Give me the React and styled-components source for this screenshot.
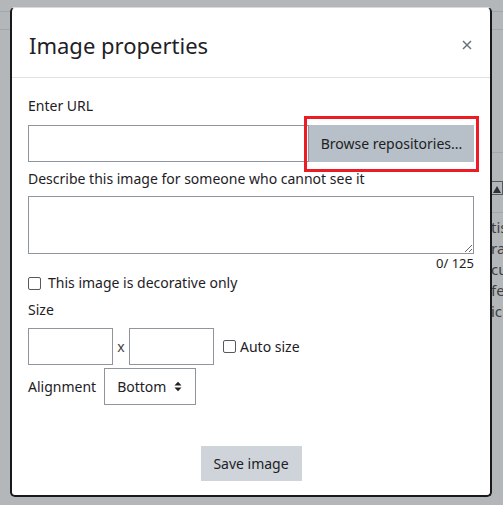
import styled, { createGlobalStyle } from "styled-components";

const GlobalStyle = createGlobalStyle`
  html, body {
    margin: 0;
    padding: 0;
  }
  body {
    width: 503px;
    height: 505px;
    overflow: hidden;
    background: #b4b7ba;
    font-family: "Noto Sans", "Open Sans", Arial, sans-serif;
    color: #1d2125;
  }
  #root {
    position: relative;
    width: 503px;
    height: 505px;
  }
`;

// page behind the dimmed backdrop
const Page = styled.div`
  width: 503px;
  height: 505px;
  display: flex;
  flex-direction: column;
`;

const NavBand = styled.div`
  height: ${(p) => p.h}px;
  border-bottom: 1px solid #a4a7aa;
  flex-shrink: 0;
`;

const PageBody = styled.div`
  flex: 1;
  display: grid;
  grid-template-columns: 1fr 12px;
`;

const Side = styled.div`
  overflow: hidden;
  padding-top: 122px;
  display: flex;
  flex-direction: column;
  font-size: 15px;
  color: #3c4146;
`;

const SideRule = styled.div`
  border-top: 1px solid #a4a7aa;
  height: ${(p) => p.h}px;
`;

const SideIcon = styled.div`
  width: 12px;
  height: 16px;
  display: flex;
  align-items: center;
  margin-bottom: 16px;
`;

const SideText = styled.div`
  white-space: nowrap;
  line-height: 21px;
`;

// modal
const Modal = styled.div`
  position: absolute;
  left: 10px;
  top: 7px;
  width: 482px;
  height: 490px;
  box-sizing: border-box;
  background: #fff;
  border: 2px solid #17191b;
  border-top: 1px solid #d9dcdf;
  border-radius: 5px;
  display: flex;
  flex-direction: column;
`;

const Header = styled.div`
  height: 70px;
  box-sizing: border-box;
  display: flex;
  align-items: center;
  justify-content: space-between;
  padding: 5px 17px 0 17px;
  border-bottom: 1px solid #dee2e6;
`;

const Title = styled.h5`
  margin: 0;
  font-size: 22px;
  font-weight: 400;
  line-height: 1.2;
  color: #1d2125;
`;

const Close = styled.button`
  border: none;
  background: none;
  padding: 0;
  width: 12px;
  height: 12px;
  display: flex;
  align-items: center;
  justify-content: center;
  cursor: pointer;
`;

const Body = styled.div`
  padding: 17px 16px 0 16px;
  display: flex;
  flex-direction: column;
  font-size: 14px;
`;

const Label = styled.label`
  display: block;
  line-height: 22px;
  margin-bottom: ${(p) => p.mb ?? 7}px;
`;

const InputGroup = styled.div`
  display: flex;
  height: 37px;
  margin-bottom: 6px;
`;

const TextInput = styled.input`
  box-sizing: border-box;
  height: ${(p) => p.h ?? 37}px;
  width: ${(p) => (p.w ? `${p.w}px` : "auto")};
  flex: ${(p) => (p.w ? "none" : 1)};
  min-width: 0;
  border: 1px solid #8f959e;
  border-radius: 0;
  padding: 0 10px;
  font: inherit;
  background: #fff;
  outline: none;
`;

const BrowseWrap = styled.div`
  position: relative;
  display: flex;
`;

const Highlight = styled.div`
  position: absolute;
  left: -5px;
  top: -9px;
  right: -5px;
  bottom: -10px;
  border: 3px solid #ec1c24;
  pointer-events: none;
`;

const GreyButton = styled.button`
  border: none;
  border-radius: 0;
  background: ${(p) => p.bg};
  color: #1d2125;
  font: inherit;
  font-size: 14px;
  width: ${(p) => p.w}px;
  padding: 0;
  height: ${(p) => p.h}px;
  cursor: pointer;
`;

const TextArea = styled.textarea`
  box-sizing: border-box;
  height: 58px;
  width: 100%;
  border: 1px solid #8f959e;
  border-radius: 0;
  font: inherit;
  resize: vertical;
  display: block;
  outline: none;
`;

const Counter = styled.div`
  text-align: right;
  font-size: 13px;
  line-height: 18px;
  color: #1d2125;
`;

const CheckRow = styled.label`
  display: flex;
  align-items: center;
  gap: ${(p) => p.gap ?? 7}px;
  line-height: 22px;
  margin: ${(p) => p.m ?? "0"};
`;

const Box = styled.span`
  width: 11px;
  height: 11px;
  border: 1px solid #555a60;
  border-radius: 2px;
  background: #fff;
  flex-shrink: 0;
`;

const SizeRow = styled.div`
  display: flex;
  align-items: center;
  height: 37px;
  margin-bottom: 3px;
`;

const Times = styled.span`
  width: 16px;
  text-align: center;
  color: #444;
`;

const AlignRow = styled.div`
  display: flex;
  align-items: center;
  gap: 8px;
  height: 37px;
`;

const Select = styled.div`
  box-sizing: border-box;
  height: 37px;
  width: 92px;
  border: 1px solid #8f959e;
  display: flex;
  align-items: center;
  padding-left: 12px;
  gap: 8px;
  color: #1d2125;
`;

const Footer = styled.div`
  display: flex;
  justify-content: center;
  padding-top: 41px;
`;

function Caret() {
  return (
    <svg width="8" height="11" viewBox="0 0 8 11">
      <path d="M0.5 4.5 L4 0.8 L7.5 4.5 Z" fill="#1d2125" />
      <path d="M0.5 6.5 L4 10.2 L7.5 6.5 Z" fill="#1d2125" />
    </svg>
  );
}

export default function App() {
  return (
    <>
      <GlobalStyle />
      <Page>
        <NavBand h={11} />
        <NavBand h={17} />
        <PageBody>
          <div />
          <Side>
            <SideRule h={27} />
            <SideIcon>
              <svg width="12" height="14" viewBox="0 0 12 14">
                <rect x="0.5" y="0.5" width="11" height="13" fill="none" stroke="#55595e" />
                <path d="M2 12 L6 5 L10 12 Z" fill="#2f3337" />
              </svg>
            </SideIcon>
            <SideRule h={4} />
            <SideText>tistics</SideText>
            <SideText>rading</SideText>
            <SideText>cument</SideText>
            <SideText>feedback</SideText>
            <SideText>ick</SideText>
          </Side>
        </PageBody>
      </Page>

      <Modal role="dialog">
        <Header>
          <Title>Image properties</Title>
          <Close aria-label="Close">
            <svg width="10" height="10" viewBox="0 0 10 10">
              <path d="M1 1 L9 9 M9 1 L1 9" stroke="#6a737b" strokeWidth="1.5" />
            </svg>
          </Close>
        </Header>
        <Body>
          <Label mb={8}>Enter URL</Label>
          <InputGroup>
            <TextInput />
            <BrowseWrap>
              <GreyButton bg="#b7c0c8" w={165} h={37}>
                Browse repositories...
              </GreyButton>
              <Highlight />
            </BrowseWrap>
          </InputGroup>
          <Label mb={6}>Describe this image for someone who cannot see it</Label>
          <TextArea />
          <Counter>0/ 125</Counter>
          <CheckRow m="0 0 5px 0">
            <Box />
            This image is decorative only
          </CheckRow>
          <Label mb={7}>Size</Label>
          <SizeRow>
            <TextInput w={85} />
            <Times>x</Times>
            <TextInput w={85} />
            <CheckRow gap={4} m="0 0 0 9px">
              <Box />
              Auto size
            </CheckRow>
          </SizeRow>
          <AlignRow>
            <span>Alignment</span>
            <Select>
              Bottom
              <Caret />
            </Select>
          </AlignRow>
          <Footer>
            <GreyButton bg="#ced4da" w={101} h={35}>
              Save image
            </GreyButton>
          </Footer>
        </Body>
      </Modal>
    </>
  );
}
